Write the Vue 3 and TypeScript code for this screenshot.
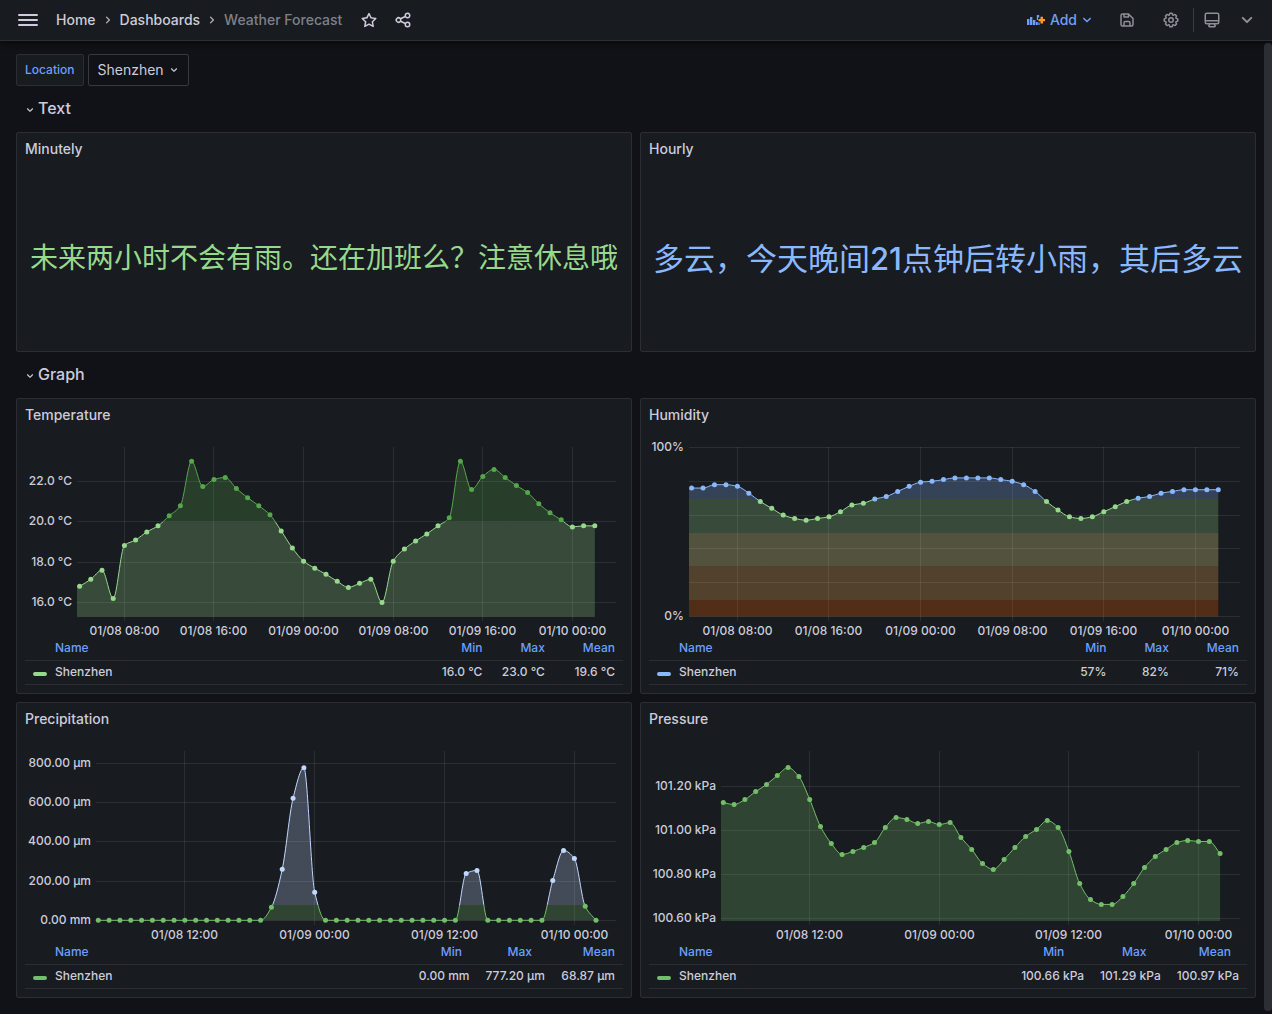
<script setup lang="ts">
import { computed, ref } from 'vue'

interface Band { from: number; color: string }
interface Tick { at: number; label: string }
interface Chart {
  id: string
  title: string
  color: string
  left: number
  firstX: number
  step: number
  high: [value: number, y: number]
  low: [value: number, y: number]
  bands: Band[]
  xTicks: Tick[]
  yTicks: Tick[]
  stats: string[]
  values: number[]
}

const icons = {
  star: 'M22,9.67A1,1,0,0,0,21.14,9l-5.69-.83L12.9,3a1,1,0,0,0-1.8,0L8.55,8.16,2.86,9a1,1,0,0,0-.81.68,1,1,0,0,0,.25,1l4.13,4-1,5.68A1,1,0,0,0,6.9,21.44L12,18.77l5.1,2.67a.93.93,0,0,0,.46.12,1,1,0,0,0,.59-.19,1,1,0,0,0,.4-1l-1-5.68,4.13-4A1,1,0,0,0,22,9.67Zm-6.15,4a1,1,0,0,0-.29.88l.72,4.2-3.76-2a1.06,1.06,0,0,0-.94,0l-3.76,2,.72-4.2a1,1,0,0,0-.29-.88l-3-3,4.21-.61a1,1,0,0,0,.76-.55L12,5.7l1.88,3.82a1,1,0,0,0,.76.55l4.21.61Z',
  down: 'M17,9.17a1,1,0,0,0-1.41,0L12,12.71,8.46,9.17a1,1,0,0,0-1.41,0,1,1,0,0,0,0,1.42l4.24,4.24a1,1,0,0,0,1.42,0L17,10.59A1,1,0,0,0,17,9.17Z',
  right: 'M14.83,11.29,10.59,7.05a1,1,0,0,0-1.42,0,1,1,0,0,0,0,1.41L12.71,12,9.17,15.54a1,1,0,0,0,0,1.41,1,1,0,0,0,.71.29,1,1,0,0,0,.71-.29l4.24-4.24A1,1,0,0,0,14.83,11.29Z',
  share: 'M18,14a4,4,0,0,0-3.08,1.48l-5.1-2.35a3.64,3.64,0,0,0,0-2.26l5.1-2.35A4,4,0,1,0,14,6a4.17,4.17,0,0,0,.07.71L8.79,9.14a4,4,0,1,0,0,5.72l5.28,2.43A4.17,4.17,0,0,0,14,18a4,4,0,1,0,4-4ZM18,4a2,2,0,1,1-2,2A2,2,0,0,1,18,4ZM6,14a2,2,0,1,1,2-2A2,2,0,0,1,6,14Zm12,6a2,2,0,1,1,2-2A2,2,0,0,1,18,20Z',
  save: 'M20.71,9.29l-6-6a1,1,0,0,0-.32-.21A1.09,1.09,0,0,0,14,3H6A3,3,0,0,0,3,6V18a3,3,0,0,0,3,3H18a3,3,0,0,0,3-3V10A1,1,0,0,0,20.71,9.29ZM9,5h4V7H9Zm6,14H9V16a1,1,0,0,1,1-1h4a1,1,0,0,1,1,1Zm4-1a1,1,0,0,1-1,1H17V16a3,3,0,0,0-3-3H10a3,3,0,0,0-3,3v3H6a1,1,0,0,1-1-1V6A1,1,0,0,1,6,5H7V8A1,1,0,0,0,8,9h6a1,1,0,0,0,1-1V6.41l4,4Z',
  cog: 'M21.32,9.55l-1.89-.63.89-1.78A1,1,0,0,0,20.13,6L18,3.87a1,1,0,0,0-1.15-.19l-1.78.89-.63-1.89A1,1,0,0,0,13.5,2h-3a1,1,0,0,0-.95.68L8.92,4.57,7.14,3.68A1,1,0,0,0,6,3.87L3.87,6a1,1,0,0,0-.19,1.15l.89,1.78-1.89.63A1,1,0,0,0,2,10.5v3a1,1,0,0,0,.68.95l1.89.63-.89,1.78A1,1,0,0,0,3.87,18L6,20.13a1,1,0,0,0,1.15.19l1.78-.89.63,1.89a1,1,0,0,0,.95.68h3a1,1,0,0,0,.95-.68l.63-1.89,1.78.89A1,1,0,0,0,18,20.13L20.13,18a1,1,0,0,0,.19-1.15l-.89-1.78,1.89-.63A1,1,0,0,0,22,13.5v-3A1,1,0,0,0,21.32,9.55ZM20,12.78l-1.2.4A2,2,0,0,0,17.64,16l.57,1.14-1.1,1.1L16,17.64a2,2,0,0,0-2.79,1.16l-.4,1.2H11.22l-.4-1.2A2,2,0,0,0,8,17.64l-1.14.57-1.1-1.1L6.36,16A2,2,0,0,0,5.2,13.18L4,12.78V11.22l1.2-.4A2,2,0,0,0,6.36,8L5.79,6.89l1.1-1.1L8,6.36A2,2,0,0,0,10.82,5.2l.4-1.2h1.56l.4,1.2A2,2,0,0,0,16,6.36l1.14-.57,1.1,1.1L17.64,8a2,2,0,0,0,1.16,2.79l1.2.4ZM12,8a4,4,0,1,0,4,4A4,4,0,0,0,12,8Zm0,6a2,2,0,1,1,2-2A2,2,0,0,1,12,14Z',
  monitor: 'M19,2H5A3,3,0,0,0,2,5V15a3,3,0,0,0,3,3H7.64l-.58,1a2,2,0,0,0,0,2,2,2,0,0,0,1.75,1h6.46A2,2,0,0,0,17,21a2,2,0,0,0,0-2l-.59-1H19a3,3,0,0,0,3-3V5A3,3,0,0,0,19,2ZM8.77,20,10,18H14l1.2,2ZM20,15a1,1,0,0,1-1,1H5a1,1,0,0,1-1-1V14H20Zm0-3H4V5A1,1,0,0,1,5,4H19a1,1,0,0,1,1,1Z',
}

// Tick positions are hours after the first sample (04:00 on 01/08).
const every8h: Tick[] = [
  { at: 4, label: '01/08 08:00' }, { at: 12, label: '01/08 16:00' }, { at: 20, label: '01/09 00:00' },
  { at: 28, label: '01/09 08:00' }, { at: 36, label: '01/09 16:00' }, { at: 44, label: '01/10 00:00' },
]
const every12h: Tick[] = [
  { at: 8, label: '01/08 12:00' }, { at: 20, label: '01/09 00:00' },
  { at: 32, label: '01/09 12:00' }, { at: 44, label: '01/10 00:00' },
]

const zeros = (n: number): number[] => Array(n).fill(0)

const charts: Chart[] = [
  {
    id: 'temperature', title: 'Temperature', color: '#96d98d', left: 60, firstX: 62.6, step: 11.2,
    high: [22, 50.5], low: [16, 171.5],
    bands: [{ from: 20, color: '#56a64b' }, { from: 0, color: '#96d98d' }],
    xTicks: every8h,
    yTicks: [22, 20, 18, 16].map((v) => ({ at: v, label: v.toFixed(1) + ' °C' })),
    stats: ['16.0 °C', '23.0 °C', '19.6 °C'],
    values: [16.8, 17.15, 17.6, 16.2, 18.83, 19.1, 19.5, 19.8, 20.3, 20.8, 23, 21.75, 22.1, 22.2, 21.65, 21.2,
      20.8, 20.35, 19.55, 18.7, 18.05, 17.7, 17.4, 17.05, 16.75, 16.95, 17.15, 16, 18.05, 18.65, 19.05, 19.4,
      19.8, 20.2, 23, 21.6, 22.25, 22.6, 22.2, 21.8, 21.45, 20.9, 20.45, 20.1, 19.75, 19.8, 19.8],
  },
  {
    id: 'humidity', title: 'Humidity', color: '#8ab8ff', left: 48, firstX: 50.6, step: 11.45,
    high: [100, 16.5], low: [0, 185.5],
    bands: [{ from: 69.5, color: '#8ab8ff' }, { from: 49.5, color: '#96d98d' }, { from: 30, color: '#fff899' },
      { from: 10, color: '#ffb357' }, { from: 0, color: '#fa6400' }],
    xTicks: every8h,
    yTicks: [100, 80, 60, 40, 20, 0].map((v) => ({ at: v, label: v % 100 ? '' : v + '%' })),
    stats: ['57%', '82%', '71%'],
    values: [76, 76, 78, 78, 77, 73, 68, 64, 60, 58, 57, 58, 59, 62, 66, 67, 69.5, 71, 74, 77, 79.5, 80, 81, 82,
      82, 82, 82, 81, 80, 78, 74, 68, 63, 59, 58, 59, 62, 65, 68, 70, 71, 73, 74, 75, 75, 75, 75],
  },
  {
    id: 'precipitation', title: 'Precipitation', color: '#73bf69', left: 79, firstX: 81.3, step: 10.82,
    high: [800, 28.3], low: [0, 185.3],
    bands: [{ from: 80, color: '#c0d8ff' }, { from: 0, color: '#73bf69' }],
    xTicks: every12h,
    yTicks: [800, 600, 400, 200, 0].map((v) => ({ at: v, label: v ? v.toFixed(2) + ' µm' : '0.00 mm' })),
    stats: ['0.00 mm', '777.20 µm', '68.87 µm'],
    values: [...zeros(16), 66, 260, 622, 777.2, 143, ...zeros(13), 239, 254, ...zeros(6), 203, 356, 315, 71, 0],
  },
  {
    id: 'pressure', title: 'Pressure', color: '#73bf69', left: 80, firstX: 82.3, step: 10.8,
    high: [101.2, 51.5], low: [100.6, 183.5],
    bands: [{ from: 0, color: '#73bf69' }],
    xTicks: every12h,
    yTicks: [101.2, 101, 100.8, 100.6].map((v) => ({ at: v, label: v.toFixed(2) + ' kPa' })),
    stats: ['100.66 kPa', '101.29 kPa', '100.97 kPa'],
    values: [101.127, 101.118, 101.141, 101.177, 101.209, 101.25, 101.286, 101.245, 101.141, 101.018, 100.941,
      100.891, 100.905, 100.923, 100.945, 101.014, 101.059, 101.05, 101.032, 101.041, 101.027, 101.036, 100.968,
      100.914, 100.85, 100.823, 100.868, 100.923, 100.973, 101.005, 101.045, 101.014, 100.905, 100.759, 100.686,
      100.664, 100.664, 100.7, 100.759, 100.832, 100.882, 100.914, 100.945, 100.955, 100.95, 100.95, 100.895],
  },
]

const PLOT_TOP = 16
const PLOT_BOTTOM = 186
const PLOT_RIGHT = 599

// Monotone cubic interpolation: the curve never overshoots a sample.
function smoothPath(pts: { x: number; y: number }[]): string {
  const n = pts.length
  const slope = pts.slice(1).map((p, i) => (p.y - pts[i].y) / (p.x - pts[i].x))
  const m = pts.map((_, i) => {
    if (i === 0) return slope[0]
    if (i === n - 1) return slope[n - 2]
    const a = slope[i - 1]
    const b = slope[i]
    return a * b <= 0 ? 0 : (2 * a * b) / (a + b)
  })
  let d = `M${pts[0].x},${pts[0].y}`
  for (let i = 1; i < n; i++) {
    const h = (pts[i].x - pts[i - 1].x) / 3
    d += `C${pts[i - 1].x + h},${pts[i - 1].y + m[i - 1] * h} ${pts[i].x - h},${pts[i].y - m[i] * h} ${pts[i].x},${pts[i].y}`
  }
  return d
}

function build(c: Chart) {
  const [hv, hy] = c.high
  const [lv, ly] = c.low
  const yOf = (v: number) => ly + ((v - lv) * (hy - ly)) / (hv - lv)
  const xOf = (hour: number) => c.firstX + hour * c.step
  const colorOf = (v: number) => c.bands.find((b) => v >= b.from)!.color
  const pts = c.values.map((v, i) => ({ x: xOf(i), y: yOf(v), color: colorOf(v) }))
  const line = smoothPath(pts)
  const base = Math.min(PLOT_BOTTOM, yOf(0))
  const area = `${line}V${base}H${c.left}V${pts[0].y}Z`
  const stops = c.bands.flatMap((b, i) => {
    const start = i === 0 ? 0 : yOf(c.bands[i - 1].from) / 206
    const end = i === c.bands.length - 1 ? 1 : yOf(b.from) / 206
    return [{ offset: start, color: b.color }, { offset: end, color: b.color }]
  })
  return {
    ...c, pts, line, area, stops,
    gridX: c.xTicks.map((t) => ({ x: Math.floor(xOf(t.at)) + 0.5, label: t.label })),
    gridY: c.yTicks.map((t) => ({ y: Math.floor(yOf(t.at)) + 0.5, label: t.label })),
  }
}

const views = computed(() => charts.map(build))
const location = ref('Shenzhen')
</script>

<template>
  <div class="app">
    <header class="topbar">
      <button class="icon-btn menu" aria-label="Menu">
        <svg width="20" height="14" viewBox="0 0 20 14"><path d="M1 2H19M1 7H19M1 12H19" stroke="currentColor" stroke-width="2" stroke-linecap="round" /></svg>
      </button>
      <nav class="crumbs" aria-label="Breadcrumbs">
        <a href="#">Home</a>
        <svg class="sep" viewBox="0 0 24 24"><path :d="icons.right" /></svg>
        <a href="#">Dashboards</a>
        <svg class="sep" viewBox="0 0 24 24"><path :d="icons.right" /></svg>
        <span class="current">Weather Forecast</span>
      </nav>
      <button class="icon-btn star" aria-label="Mark as favorite"><svg class="ic" viewBox="0 0 24 24"><path :d="icons.star" /></svg></button>
      <button class="icon-btn share" aria-label="Share"><svg class="ic" viewBox="0 0 24 24"><path :d="icons.share" /></svg></button>
      <div class="actions">
        <button class="add">
          <svg width="18" height="12" viewBox="0 0 18 12">
            <path fill="#6e9fff" d="M0 5h2.400v6H0zM3 3h2.400v8H3zM6 6h2.400v5H6zM9 8h1.800v3H9zM9.800 1h2.400v2.600h-1.200v2.400H9.800zM11.400 8.500h1.200v2.500h-1.200z" />
            <path fill="#ff9830" d="M13.500 2.700h2.500v2.300h2.200v2.200h-2.200v2.400h-2.500V7.200h-2V5h2z" />
          </svg>
          <span>Add</span>
          <svg class="ic" viewBox="0 0 24 24"><path :d="icons.down" /></svg>
        </button>
        <button class="icon-btn muted" aria-label="Save dashboard"><svg class="ic" viewBox="0 0 24 24"><path :d="icons.save" /></svg></button>
        <button class="icon-btn muted" aria-label="Dashboard settings"><svg class="ic" viewBox="0 0 24 24"><path :d="icons.cog" /></svg></button>
        <span class="divider"></span>
        <button class="icon-btn muted" aria-label="Cycle view mode"><svg class="ic" viewBox="0 0 24 24"><path :d="icons.monitor" /></svg></button>
        <button class="icon-btn muted" aria-label="Toggle top search bar"><svg class="ic-lg" viewBox="0 0 24 24"><path :d="icons.down" /></svg></button>
      </div>
    </header>

    <main class="dashboard">
      <div class="variables">
        <label for="location" class="var-label">Location</label>
        <div class="var-value">
          <select id="location" v-model="location"><option>Shenzhen</option></select>
          <svg viewBox="0 0 24 24"><path :d="icons.down" /></svg>
        </div>
      </div>

      <button class="row-title"><svg viewBox="0 0 24 24"><path :d="icons.down" /></svg>Text</button>
      <div class="grid">
        <section class="panel text-panel">
          <h2>Minutely</h2>
          <p class="stat minutely">未来两小时不会有雨。还在加班么？注意休息哦</p>
        </section>
        <section class="panel text-panel">
          <h2>Hourly</h2>
          <p class="stat hourly"><span>多云，今天晚间<b>21</b>点钟后转小雨，其后多云</span></p>
        </section>
      </div>

      <button class="row-title"><svg viewBox="0 0 24 24"><path :d="icons.down" /></svg>Graph</button>
      <div class="grid">
        <section v-for="c in views" :key="c.id" class="panel">
          <h2>{{ c.title }}</h2>
          <svg class="chart" viewBox="0 0 614 206" role="img" :aria-label="c.title">
            <defs>
              <linearGradient :id="c.id" gradientUnits="userSpaceOnUse" x1="0" y1="0" x2="0" y2="206">
                <stop v-for="(s, i) in c.stops" :key="i" :offset="s.offset" :stop-color="s.color" />
              </linearGradient>
            </defs>
            <g class="gridlines">
              <line v-for="g in c.gridY" :key="g.y" :x1="c.left" :x2="PLOT_RIGHT" :y1="g.y" :y2="g.y" />
              <line v-for="g in c.gridX" :key="g.x" :x1="g.x" :x2="g.x" :y1="PLOT_TOP" :y2="PLOT_BOTTOM + 4" />
            </g>
            <path :d="c.area" :fill="`url(#${c.id})`" fill-opacity="0.25" />
            <path :d="c.line" :stroke="`url(#${c.id})`" fill="none" />
            <circle v-for="p in c.pts" :key="p.x" :cx="p.x" :cy="p.y" r="2.500" :fill="p.color" />
            <g class="labels">
              <text v-for="g in c.gridY" :key="g.y" :x="c.left - 5" :y="g.y + 3.500" text-anchor="end">{{ g.label }}</text>
              <text v-for="g in c.gridX" :key="g.x" :x="g.x" y="204" text-anchor="middle">{{ g.label }}</text>
            </g>
          </svg>
          <table class="legend">
            <thead>
              <tr><th class="name">Name</th><th>Min</th><th>Max</th><th>Mean</th></tr>
            </thead>
            <tbody>
              <tr>
                <td class="name"><span class="series"><i :style="{ background: c.color }"></i>Shenzhen</span></td>
                <td v-for="s in c.stats" :key="s">{{ s }}</td>
              </tr>
            </tbody>
          </table>
        </section>
      </div>
    </main>
    <div class="scroll-thumb"></div>
  </div>
</template>

<style>
body {
  background: #111217;
}
</style>

<style scoped>
.app {
  position: relative;
  min-height: 100vh;
  background: #111217;
  color: #ccccdc;
  font: 400 14px/22px Inter, "Noto Sans CJK SC", sans-serif;
}
.app * {
  box-sizing: border-box;
}
button {
  display: flex;
  align-items: center;
  padding: 0;
  border: 0;
  background: none;
  color: inherit;
  font: inherit;
  cursor: pointer;
}
svg {
  display: block;
  flex: none;
  fill: currentColor;
}
.topbar {
  position: relative;
  display: flex;
  align-items: center;
  height: 41px;
  padding: 0 13px 0 16px;
  background: #181b1f;
  border-bottom: 1px solid #2d2e34;
  box-shadow: 0 2px 5px #08090b;
}
.icon-btn {
  justify-content: center;
  width: 24px;
  height: 24px;
}
.menu {
  margin-right: 16px;
}
.crumbs {
  display: flex;
  align-items: center;
  font-weight: 500;
}
.crumbs a {
  color: inherit;
  text-decoration: none;
}
.sep {
  width: 16px;
  height: 16px;
  margin: 0 4px;
  color: #a9a9b7;
}
.current {
  color: #7f8089;
}
.star {
  margin-left: 15px;
}
.share {
  margin-left: 10px;
}
.ic {
  width: 18px;
  height: 18px;
}
.ic-lg {
  width: 24px;
  height: 24px;
}
.actions {
  display: flex;
  align-items: center;
  margin-left: auto;
}
.actions .icon-btn {
  margin-left: 20px;
}
.actions .add + .icon-btn {
  margin-left: 19px;
}
.actions .divider + .icon-btn {
  margin-left: 6px;
}
.actions .icon-btn:last-child {
  margin-left: 11px;
}
.add {
  gap: 5px;
  color: #6e9fff;
  font-weight: 500;
}
.add .ic {
  margin-left: -4px;
}
.muted {
  color: #8e8f9a;
}
.divider {
  width: 1px;
  height: 24px;
  margin-left: 10px;
  background: #3a3c42;
}
.dashboard {
  display: flex;
  flex-direction: column;
  gap: 8px;
  padding: 13px 16px 16px;
}
.variables {
  display: flex;
  gap: 4px;
}
.var-label {
  height: 32px;
  padding: 0 9px 0 8px;
  border: 1px solid #2d2e34;
  border-radius: 2px;
  background: #181b1f;
  color: #6e9fff;
  font-size: 12px;
  font-weight: 500;
  line-height: 30px;
}
.var-value {
  position: relative;
}
.var-value select {
  height: 32px;
  padding: 0 24px 0 8px;
  border: 1px solid #38393f;
  border-radius: 2px;
  background: #111217;
  color: inherit;
  font: inherit;
  appearance: none;
}
.var-value svg {
  position: absolute;
  top: 9px;
  right: 8px;
  width: 14px;
  height: 14px;
  pointer-events: none;
}
.row-title {
  align-self: flex-start;
  height: 30px;
  padding: 0 0 2px 7px;
  gap: 1px;
  font-size: 16px;
  font-weight: 500;
}
.row-title svg {
  width: 14px;
  height: 14px;
  margin-top: 4px;
}
.grid {
  display: grid;
  grid-template-columns: 1fr 1fr;
  gap: 8px;
}
.panel {
  display: flex;
  flex-direction: column;
  min-width: 0;
  padding-bottom: 8px;
  border: 1px solid #2d2e34;
  border-radius: 2px;
  background: #181b1f;
}
.panel h2 {
  margin: 0;
  padding: 0 8px;
  font-size: 14px;
  font-weight: 500;
  line-height: 32px;
}
.text-panel {
  min-height: 220px;
  padding-bottom: 0;
}
.stat {
  display: flex;
  flex: 1;
  align-items: center;
  justify-content: center;
  margin: 0;
  line-height: 1;
}
.stat b {
  font-weight: 500;
}
.minutely {
  color: #96d98d;
  font-size: 28px;
}
.hourly {
  color: #8ab8ff;
  font-size: 31px;
}
.chart {
  width: 100%;
  height: auto;
}
.gridlines line {
  stroke: rgba(240, 250, 255, 0.09);
}
.labels text {
  fill: #ccccdc;
  font-size: 12px;
  font-weight: 500;
}
.legend {
  margin: 0 8px;
  border-collapse: collapse;
  font-size: 12px;
  font-weight: 500;
  line-height: 21px;
}
.legend tr {
  border-bottom: 1px solid #2d2e34;
}
.legend th {
  padding: 0 8px 2px 30px;
  color: #6e9fff;
  font-weight: 500;
  text-align: left;
}
.legend td {
  padding: 0 8px 2px;
  text-align: right;
  white-space: nowrap;
}
.legend .name {
  width: 100%;
  text-align: left;
}
.series {
  display: flex;
  align-items: center;
  gap: 8px;
}
.series i {
  width: 14px;
  height: 4px;
  margin-top: 4px;
  border-radius: 2px;
}
.scroll-thumb {
  position: absolute;
  top: 43px;
  right: 0;
  bottom: 3px;
  width: 8px;
  border-radius: 4px;
  background: #2d2e33;
}
</style>
